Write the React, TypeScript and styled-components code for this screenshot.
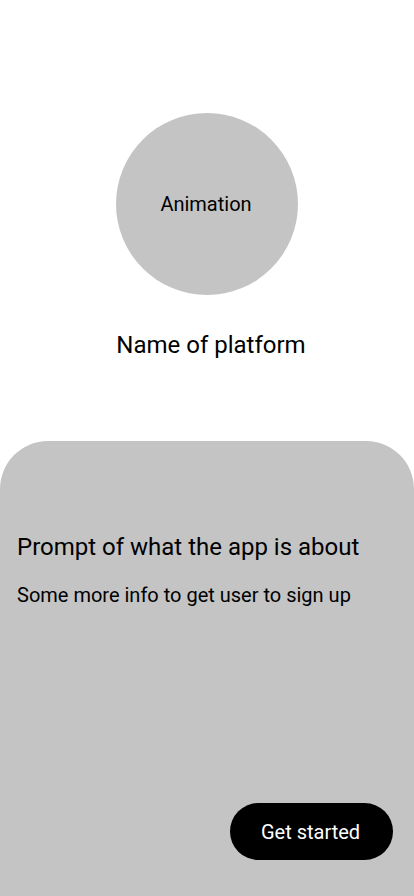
import React from "react";
import styled, { createGlobalStyle } from "styled-components";

const Global = createGlobalStyle`
  html, body { margin: 0; padding: 0; background: #ffffff; }
  body { font-family: Roboto, "Noto Sans", sans-serif; color: #000; }
  * { box-sizing: border-box; }
`;

const Screen = styled.div`
  width: 414px;
  height: 896px;
  display: flex;
  flex-direction: column;
  overflow: hidden;
`;

const Hero = styled.section`
  height: 441px;
  flex-shrink: 0;
  display: flex;
  flex-direction: column;
  align-items: center;
  padding-top: 113px;
`;

const AnimationCircle = styled.div`
  width: 182px;
  height: 182px;
  border-radius: 50%;
  background: #c4c4c4;
  display: flex;
  align-items: center;
  justify-content: center;
  font-size: 20px;
  line-height: 23px;
  padding-right: 2px;
`;

const PlatformName = styled.h1`
  margin: 36px 0 0 8px;
  font-size: 24px;
  font-weight: 400;
  line-height: 28px;
`;

const Panel = styled.section`
  flex: 1;
  background: #c4c4c4;
  border-radius: 48px 48px 0 0;
  display: flex;
  flex-direction: column;
  padding: 92px 21px 36px 17px;
`;

const Title = styled.h2`
  margin: 0;
  font-size: 24px;
  font-weight: 400;
  line-height: 28px;
`;

const Subtitle = styled.p`
  margin: 23px 0 0;
  font-size: 20px;
  line-height: 23px;
`;

const StartButton = styled.button`
  margin-top: auto;
  align-self: flex-end;
  width: 163px;
  height: 57px;
  border: none;
  border-radius: 29px;
  background: #000;
  color: #fff;
  font-family: Roboto, "Noto Sans", sans-serif;
  font-size: 20px;
  padding: 0 2px 0 0;
  cursor: pointer;
`;

export default function App() {
  return (
    <>
      <Global />
      <Screen>
        <Hero>
          <AnimationCircle>Animation</AnimationCircle>
          <PlatformName>Name of platform</PlatformName>
        </Hero>
        <Panel>
          <Title>Prompt of what the app is about</Title>
          <Subtitle>Some more info to get user to sign up</Subtitle>
          <StartButton>Get started</StartButton>
        </Panel>
      </Screen>
    </>
  );
}
